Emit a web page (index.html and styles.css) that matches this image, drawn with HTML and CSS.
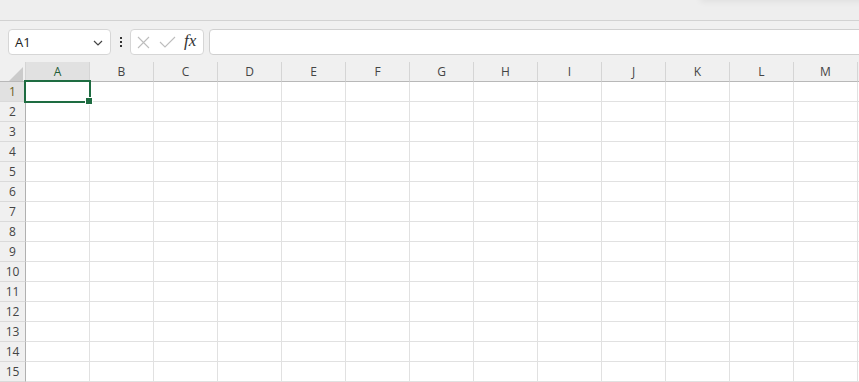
FILE: index.html
```html
<!DOCTYPE html>
<html lang="en">
<head>
  <meta charset="UTF-8" />
  <meta name="viewport" content="width=device-width, initial-scale=1.0"/>
  <title>Book1</title>
  <link rel="stylesheet" href="styles.css">
</head>
<body>
  <div class="ribbon"><div class="ribbon-shadow"></div></div>

  <div class="formula-bar">
    <div class="name-box">
      <span>A1</span>
      <svg class="chevron" width="10" height="6" viewBox="0 0 10 6"><path d="M1 1 L5 5 L9 1" fill="none" stroke="#444" stroke-width="1.2"/></svg>
    </div>
    <div class="more">
      <span></span><span></span><span></span>
    </div>
    <div class="fx-tools">
      <svg width="13" height="13" viewBox="0 0 13 13"><path d="M1 1 L12 12 M12 1 L1 12" stroke="#bdbdbd" stroke-width="1.1" fill="none"/></svg>
      <svg width="17" height="12" viewBox="0 0 17 12"><path d="M1 6 L6 11 L16 1" stroke="#bdbdbd" stroke-width="1.1" fill="none"/></svg>
      <span class="fx">fx</span>
    </div>
    <div class="formula-input"></div>
  </div>

  <div class="sheet" id="sheet"></div>

  <script>
    const sheet = document.getElementById('sheet');
    const cols = 'ABCDEFGHIJKLM'.split('');

    let html = '<div class="corner"><svg width="14" height="14" viewBox="0 0 14 14"><path d="M14 0 L14 14 L0 14 Z" fill="#cbcbcb"/></svg></div>';
    cols.forEach((c, i) => {
      html += '<div class="col-head' + (i === 0 ? ' active' : '') + '">' + c + '</div>';
    });
    html += '<div class="col-head"></div>';
    for (let r = 1; r <= 15; r++) {
      html += '<div class="row-head' + (r === 1 ? ' active' : '') + '">' + r + '</div>';
      for (let i = 0; i <= cols.length; i++) {
        if (r === 1 && i === 0) {
          html += '<div class="cell selected"><div class="cursor"><span class="handle"></span></div></div>';
        } else {
          html += '<div class="cell"></div>';
        }
      }
    }
    sheet.innerHTML = html;
  </script>
</body>
</html>
```

FILE: styles.css
```css
body {
  margin: 0;
  background: #f0f0f0;
  font-family: "Open Sans", "Noto Sans", Arial, sans-serif;
  overflow: hidden;
  width: 859px;
  height: 382px;
}
.ribbon {
  position: relative;
  height: 20px;
  background: #eeeeee;
  border-bottom: 1px solid #d2d2d2;
  overflow: hidden;
}
.ribbon-shadow {
  position: absolute;
  top: -10px;
  left: 700px;
  width: 200px;
  height: 10px;
  box-shadow: 0 2px 6px rgba(0,0,0,0.06);
}
.formula-bar {
  display: flex;
  align-items: center;
  height: 26px;
  padding: 8px 0 0 8px;
}
.name-box {
  box-sizing: border-box;
  width: 103px;
  height: 26px;
  background: white;
  border: 1px solid #d6d6d6;
  border-radius: 4px;
  display: flex;
  align-items: center;
  justify-content: space-between;
  padding: 0 7px 0 6px;
  font-size: 13px;
  color: #222;
}
.chevron {
  margin-top: 1px;
}
.more {
  width: 19px;
  display: flex;
  flex-direction: column;
  align-items: center;
  gap: 2px;
}
.more span {
  width: 2px;
  height: 2px;
  background: #333;
}
.fx-tools {
  box-sizing: border-box;
  width: 74px;
  height: 26px;
  background: white;
  border: 1px solid #d6d6d6;
  border-radius: 4px;
  display: flex;
  align-items: center;
  padding: 0 0 0 6px;
  gap: 9px;
}
.fx {
  font-family: "Liberation Serif", "DejaVu Serif", serif;
  font-style: italic;
  font-size: 17px;
  color: #333;
  margin-left: -1px;
  margin-top: -3px;
}
.formula-input {
  box-sizing: border-box;
  flex: 1;
  height: 26px;
  margin-left: 5px;
  margin-right: -10px;
  background: white;
  border: 1px solid #d0d0d0;
  border-radius: 4px;
}
.sheet {
  margin-top: 7px;
  display: grid;
  grid-template-columns: 26px repeat(14, 64px);
  grid-auto-rows: 20px;
}
.corner,
.col-head,
.row-head,
.cell {
  box-sizing: border-box;
}
.corner {
  background: #f0f0f0;
  border-right: 1px solid #d5d5d5;
  border-bottom: 1px solid #b8b8b8;
  padding: 2px 0 0 9px;
}
.col-head {
  background: #f0f0f0;
  border-right: 1px solid #d5d5d5;
  border-bottom: 1px solid #b8b8b8;
  font-size: 12px;
  line-height: 19px;
  text-align: center;
  color: #444;
}
.col-head.active {
  background: #e1e1e1;
  color: #1f5c35;
}
.row-head {
  background: #f0f0f0;
  border-right: 1px solid #b0b0b0;
  border-bottom: 1px solid #dadada;
  font-size: 12px;
  line-height: 19px;
  text-align: center;
  color: #444;
}
.row-head.active {
  background: #e1e1e1;
  color: #6b6222;
}
.cell {
  background: white;
  border-right: 1px solid #e1e1e1;
  border-bottom: 1px solid #e1e1e1;
}
.cell.selected {
  position: relative;
}
.cursor {
  position: absolute;
  left: -2px;
  top: -2px;
  width: 67px;
  height: 23px;
  box-sizing: border-box;
  border: 2px solid #1e6c41;
  z-index: 2;
}
.handle {
  position: absolute;
  right: -4px;
  bottom: -4px;
  width: 6px;
  height: 6px;
  background: #1e6c41;
  border: 1px solid white;
}
```
